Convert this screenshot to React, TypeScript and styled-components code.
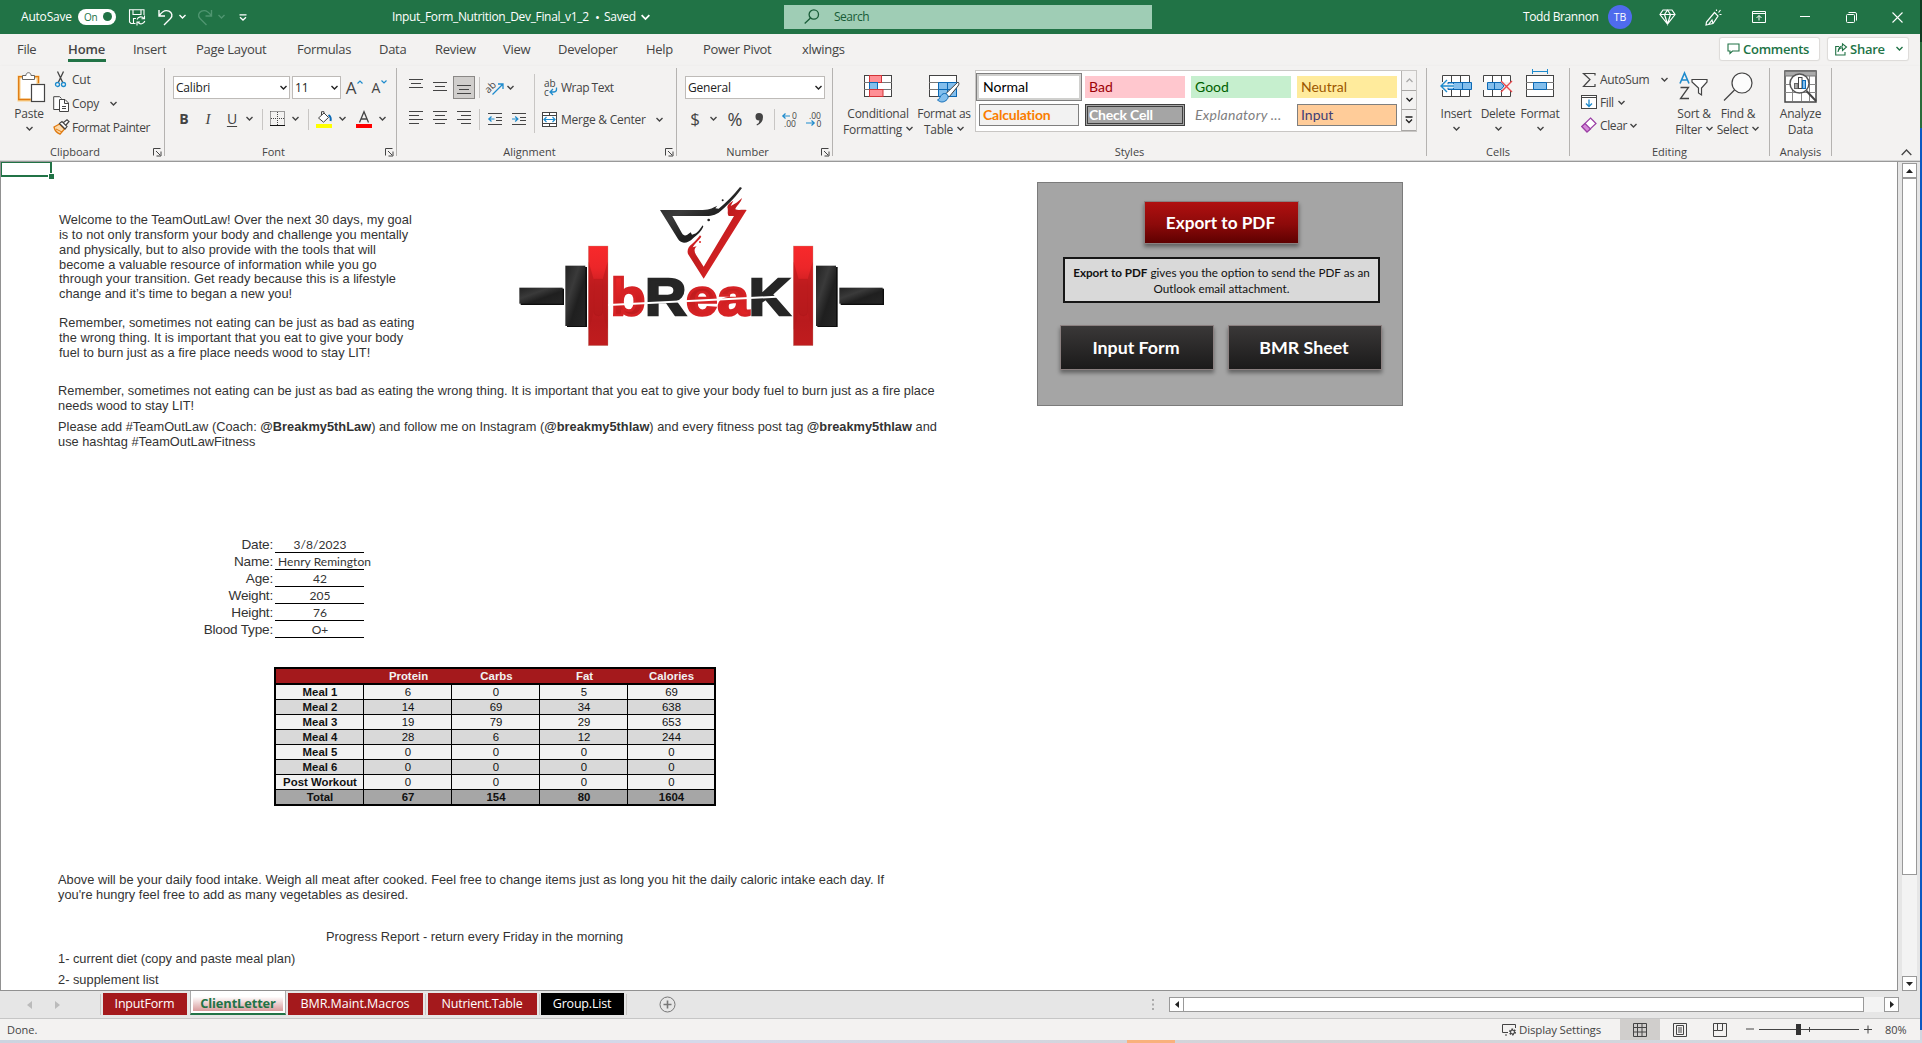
import React from 'react';
import styled, { createGlobalStyle, css } from 'styled-components';

const UI = '"Open Sans", "Noto Sans", sans-serif';
const CELL = '"Liberation Sans", Arial, sans-serif';
const CALIBRI = 'Lato, "Noto Sans", sans-serif';

const Global = createGlobalStyle`
  * { box-sizing: border-box; }
  html, body { margin: 0; padding: 0; overflow: hidden; }
  body { width: 1922px; height: 1043px; background: #d2d6e0; font-family: ${UI}; color: #444; }
  svg { display: block; flex: none; overflow: visible; }
`;

/* ---------- shared primitives ---------- */
const Row = styled.div<{ $h?: number; $mt?: number; $ml?: number }>`
  display: flex;
  align-items: center;
  flex: none;
  height: ${p => (p.$h ? `${p.$h}px` : 'auto')};
  margin-top: ${p => p.$mt ?? 0}px;
  margin-left: ${p => p.$ml ?? 0}px;
`;
const Col = styled.div<{ $w?: number; $ml?: number; $mt?: number }>`
  display: flex;
  flex-direction: column;
  flex: none;
  width: ${p => (p.$w ? `${p.$w}px` : 'auto')};
  margin-left: ${p => p.$ml ?? 0}px;
  margin-top: ${p => p.$mt ?? 0}px;
`;
const Slot = styled.div<{ $w: number; $ml?: number; $mt?: number }>`
  flex: none;
  display: flex;
  align-items: center;
  width: ${p => p.$w}px;
  margin-left: ${p => p.$ml ?? 0}px;
  margin-top: ${p => p.$mt ?? 0}px;
  white-space: nowrap;
`;
const Label = styled.span<{ $size?: number; $ls?: number; $color?: string; $bold?: boolean }>`
  font-size: ${p => p.$size ?? 12}px;
  letter-spacing: ${p => p.$ls ?? -0.4}px;
  color: ${p => p.$color ?? 'inherit'};
  font-weight: ${p => (p.$bold ? 600 : 400)};
  line-height: 16px;
  white-space: nowrap;
`;
const Icon = ({ w, h, children }: { w: number; h: number; children: React.ReactNode }) => (
  <svg width={w} height={h} viewBox={`0 0 ${w} ${h}`} fill="none" stroke="#444" strokeWidth="1">
    {children}
  </svg>
);
const Chevron = ({ color = '#444', size = 7 }: { color?: string; size?: number }) => (
  <svg width={size} height={size * 0.72} viewBox="0 0 7 5" fill="none" stroke={color} strokeWidth="1.4">
    <path d="M.5 .9 3.5 3.9 6.5 .9" />
  </svg>
);

/* ---------- window ---------- */
const Desktop = styled.div`
  display: grid;
  grid-template-columns: 1920px 2px;
  grid-template-rows: 1040px 3px;
  width: 1922px;
  height: 1043px;
`;
const Window = styled.div`
  display: flex;
  flex-direction: column;
  background: #f3f2f1;
  overflow: hidden;
`;
const Wallpaper = styled.div`
  background: linear-gradient(#0f3a20 0 42px, #2a6b3a 42px 128px, #0b5ac2 128px 1030px, #d2d6e0 1030px);
`;
const TaskbarEdge = styled.div`
  grid-column: 1 / 3;
  background: linear-gradient(90deg, transparent 1127px, #f9b17c 1127px 1175px, transparent 1175px),
    linear-gradient(90deg, #cdd4e0, #d5d9ea 700px, #d3d3d6 1300px, #d2d9e3);
`;

/* ---------- title bar ---------- */
const TitleBar = styled.div`
  display: flex;
  align-items: center;
  height: 34px;
  flex: none;
  background: #217346;
  color: #fff;
`;
const Toggle = styled.div`
  display: flex;
  align-items: center;
  justify-content: space-between;
  width: 38px;
  height: 16px;
  padding: 0 4px 0 6px;
  margin: -1px 0 0 0;
  border-radius: 8px;
  background: #fff;
  color: #217346;
  font-size: 10px;
  letter-spacing: -0.3px;
`;
const Knob = styled.i`
  width: 9px;
  height: 9px;
  border-radius: 50%;
  background: #217346;
`;
const SearchBox = styled.div`
  display: flex;
  align-items: center;
  width: 368px;
  height: 24px;
  padding-left: 20px;
  margin-left: 134px;
  background: #9fcdb5;
  color: #185c37;
`;
const Avatar = styled.div`
  display: flex;
  align-items: center;
  justify-content: center;
  width: 24px;
  height: 24px;
  border-radius: 50%;
  background: #4f6bed;
  font-size: 10.5px;
`;

/* ---------- ribbon tabs ---------- */
const Tabs = styled.div`
  display: flex;
  height: 32px;
  flex: none;
  padding-left: 17px;
`;
const Tab = styled.div<{ $w: number; $active?: boolean }>`
  width: ${p => p.$w}px;
  line-height: 31px;
  font-size: 13px;
  letter-spacing: -0.3px;
  white-space: nowrap;
  ${p => p.$active && css`
    font-weight: 600;
    letter-spacing: -0.1px;
    span {
      display: inline-block;
      width: 38px;
      height: 28px;
      border-bottom: 3px solid #217346;
    }
  `}
`;
const PillButton = styled.div<{ $w: number }>`
  display: flex;
  align-items: center;
  width: ${p => p.$w}px;
  height: 22px;
  margin-top: 4px;
  padding-left: 7px;
  border-radius: 2px;
  background: #fff;
  box-shadow: 0 0 1px 1px #dcdad8;
  color: #217346;
`;

/* ---------- ribbon ---------- */
const Ribbon = styled.div`
  display: flex;
  flex: none;
  height: 96px;
  border-bottom: 1px solid #999;
  box-shadow: inset 0 -1px #d4d4d4, 0 2px 4px rgba(0, 0, 0, 0.12);
`;
const GroupBox = styled.section<{ $w: number }>`
  position: relative;
  display: flex;
  flex-direction: column;
  flex: none;
  width: ${p => p.$w}px;
  &::after {
    content: '';
    position: absolute;
    right: 0;
    top: 2px;
    width: 1px;
    height: 88px;
    background: #b5b3b1;
  }
`;
const GroupBody = styled.div`
  display: flex;
  height: 77px;
  align-items: flex-start;
`;
const GroupFooter = styled.footer<{ $launcher?: boolean }>`
  display: flex;
  align-items: center;
  height: 18px;
  padding-right: 3px;
  font-size: 11px;
  line-height: 16px;
  span {
    flex: 1;
    margin: 0 0 0 ${p => (p.$launcher ? -3 : 2)}px;
    text-align: center;
  }
`;
const Group = ({ w, name, launcher, children }: { w: number; name: string; launcher?: boolean; children: React.ReactNode }) => (
  <GroupBox $w={w}>
    <GroupBody>{children}</GroupBody>
    <GroupFooter $launcher={launcher}>
      <span>{name}</span>
      {launcher && (
        <Icon w={9} h={9}>
          <path d="M.5 7.5V.5H7.5M3 3 7 7M8 3.5V8H3.5" />
        </Icon>
      )}
    </GroupFooter>
  </GroupBox>
);
const Big = styled.div<{ $w: number; $ml?: number }>`
  display: flex;
  flex-direction: column;
  align-items: center;
  flex: none;
  width: ${p => p.$w}px;
  margin-left: ${p => p.$ml ?? 0}px;
`;
const BigIcon = styled.div`
  height: 39px;
  display: flex;
  align-items: flex-start;
  flex: none;
`;
const BigLine = styled.div`
  display: flex;
  align-items: center;
  justify-content: center;
  gap: 4px;
  height: 16px;
  font-size: 12px;
  letter-spacing: -0.25px;
  white-space: nowrap;
`;
const BigButton = ({ w, ml, icon, top, bottom }: { w: number; ml?: number; icon: React.ReactNode; top: string; bottom?: string }) => (
  <Big $w={w} $ml={ml}>
    <BigIcon>{icon}</BigIcon>
    <BigLine>{top}</BigLine>
    <BigLine>
      {bottom}
      {bottom !== 'Data' && <Chevron />}
    </BigLine>
  </Big>
);
const VSep = styled.div<{ $h?: number; $ml?: number; $mt?: number }>`
  flex: none;
  width: 1px;
  height: ${p => p.$h ?? 21}px;
  margin-left: ${p => p.$ml ?? 0}px;
  margin-top: ${p => p.$mt ?? 0}px;
  background: #c8c6c4;
`;
const Combo = styled.div<{ $w: number; $ml?: number }>`
  display: flex;
  align-items: center;
  justify-content: space-between;
  flex: none;
  width: ${p => p.$w}px;
  height: 23px;
  margin-left: ${p => p.$ml ?? 0}px;
  padding: 0 2px 0 2px;
  border: 1px solid #bebbb8;
  background: #fff;
  color: #222;
  font-size: 12px;
  letter-spacing: -0.2px;
`;
const Pressed = styled.div`
  display: flex;
  justify-content: center;
  padding-top: 8px;
  width: 22px;
  height: 23px;
  margin-left: 6px;
  border: 1px solid #8a8886;
  background: #d0cecc;
`;
const Glyph = styled.span<{ $w: number; $ml?: number; $size?: number; $style?: 'bold' | 'italic' | 'underline' }>`
  flex: none;
  width: ${p => p.$w}px;
  margin-left: ${p => p.$ml ?? 0}px;
  text-align: center;
  font-size: ${p => p.$size ?? 14}px;
  line-height: 20px;
  ${p => p.$style === 'bold' && 'font-weight: 700;'}
  ${p => p.$style === 'italic' && 'font-style: italic; font-family: "Liberation Serif", serif;'}
  ${p => p.$style === 'underline' && 'text-decoration: underline; text-underline-offset: 2px;'}
`;

const Lines = ({ widths, align }: { widths: number[]; align: 'l' | 'c' | 'r' }) => (
  <Icon w={14} h={widths.length * 4}>
    {widths.map((n, i) => {
      const x = align === 'l' ? 0 : align === 'r' ? 14 - n : (14 - n) / 2;
      return <path key={i} d={`M${x} ${i * 4 + 0.5}h${n}`} />;
    })}
  </Icon>
);

/* style gallery */
const Gallery = styled.div`
  display: flex;
  width: 442px;
  height: 62px;
  margin: 4px 0 0 3px;
  border: 1px solid #c8c6c4;
  background: #fff;
`;
const Swatches = styled.div`
  display: grid;
  grid-template-columns: repeat(4, 100px);
  grid-template-rows: 22px 22px;
  gap: 6px;
  padding: 5px 0 0 3px;
  width: 425px;
`;
const Swatch = styled.div<{ $bg: string; $fg: string; $kind?: string }>`
  display: flex;
  align-items: center;
  padding: 0 0 1px 4px;
  background: ${p => p.$bg};
  color: ${p => p.$fg};
  font-family: ${CALIBRI};
  font-size: 14px;
  white-space: nowrap;
  ${p => p.$kind === 'selected' && css`box-shadow: 0 0 0 2px #d0d0ce, 0 0 0 3px #7f7f7f;`}
  ${p => p.$kind === 'calc' && css`border: 1px solid #7f7f7f; padding-left: 3px; font-weight: 700; letter-spacing: -0.2px;`}
  ${p => p.$kind === 'check' && css`border: 3px double #3f3f3f; padding-left: 1px; font-weight: 700; letter-spacing: -0.2px;`}
  ${p => p.$kind === 'italic' && css`font-style: italic; letter-spacing: 0.25px;`}
  ${p => p.$kind === 'input' && css`border: 1px solid #7f7f7f; padding-left: 3px;`}
`;
const GalleryScroll = styled.div`
  display: grid;
  grid-template-rows: 20px 19px 21px;
  width: 15px;
  div {
    display: flex;
    align-items: center;
    justify-content: center;
    border-left: 1px solid #b5b3b1;
    border-bottom: 1px solid #a8a6a4;
    background: #f3f2f1;
  }
`;

/* ---------- sheet ---------- */
const SheetArea = styled.div`
  display: grid;
  grid-template-columns: 1898px 22px;
  height: 829px;
  flex: none;
`;
const Sheet = styled.div`
  position: relative;
  display: flex;
  align-items: flex-start;
  background: #fff;
  border: 1px solid #919191;
  border-top: 0;
  overflow: hidden;
  font-family: ${CELL};
  color: #333;
`;
const Cursor = styled.div`
  position: absolute;
  left: 0;
  top: 0;
  width: 51px;
  height: 15px;
  border: 2px solid #217346;
  border-top-width: 1px;
  border-left-width: 1px;
  &::after {
    content: '';
    position: absolute;
    right: -4px;
    bottom: -4px;
    width: 5px;
    height: 5px;
    background: #217346;
    box-shadow: 0 0 0 1px #fff;
  }
`;
const Letter = styled.div`
  width: 1036px;
  flex: none;
  padding-left: 57px;
`;
const Top = styled.div`
  display: flex;
  height: 222px;
`;
const Intro = styled.div`
  width: 442px;
  padding: 51px 0 0 1px;
`;
const Text = styled.p<{ $mt?: number; $ls?: number; $indent?: number }>`
  margin: ${p => p.$mt ?? 0}px 0 0 ${p => p.$indent ?? 0}px;
  font-size: 12.8px;
  line-height: 14.85px;
  letter-spacing: ${p => p.$ls ?? 0.01}px;
  white-space: nowrap;
`;
const Facts = styled.dl`
  display: grid;
  grid-template-columns: 215px 89px;
  grid-auto-rows: 17px;
  column-gap: 2px;
  margin: 87px 0 0;
`;
const FactName = styled.dt`
  text-align: right;
  font-size: 13.6px;
  line-height: 18px;
  letter-spacing: -0.2px;
`;
const FactValue = styled.dd<{ $spill: boolean }>`
  display: flex;
  justify-content: ${p => (p.$spill ? 'flex-start' : 'center')};
  margin: 0;
  padding-left: ${p => (p.$spill ? 3 : 1)}px;
  border-bottom: 1px solid #000;
  font-family: ${CALIBRI};
  font-size: 12px;
  letter-spacing: 0.05px;
  line-height: 17px;
  white-space: nowrap;
`;
const Table = styled.div`
  display: grid;
  grid-template-columns: 88px 88px 88px 88px 86px;
  width: 442px;
  margin: 29px 0 0 216px;
  border: 2px solid #000;
  font-size: 11.4px;
  color: #111;
`;
const Cell = styled.div<{ $bg: string; $head?: boolean; $bold?: boolean; $edge?: boolean; $last?: boolean }>`
  height: ${p => (p.$head ? 16 : p.$last ? 14 : 15)}px;
  line-height: 15px;
  text-align: center;
  padding-left: 1px;
  background: ${p => p.$bg};
  color: ${p => (p.$head ? '#f2f2f2' : 'inherit')};
  font-weight: ${p => (p.$bold ? 700 : 400)};
  border-bottom: ${p => (p.$last ? '0' : p.$head ? '2px solid #000' : '1px solid #000')};
  border-right: ${p => (p.$edge || p.$head ? '0' : '1px solid #000')};
  white-space: nowrap;
`;
const Panel = styled.div`
  width: 366px;
  height: 224px;
  margin: 20px 0 0 0;
  padding: 18px 20px 0 22px;
  border: 1px solid #7b7b7b;
  background: #a5a5a5;
  font-family: ${CALIBRI};
`;
const MacroButton = styled.div<{ $w: number; $red?: boolean; $ml?: number; $mt?: number }>`
  display: flex;
  align-items: center;
  justify-content: center;
  flex: none;
  width: ${p => p.$w}px;
  height: ${p => (p.$red ? 43 : 45)}px;
  margin-left: ${p => p.$ml ?? 0}px;
  margin-top: ${p => p.$mt ?? 0}px;
  padding: 0 2px 1px 0;
  border: 1px solid #8b8080;
  background: ${p => (p.$red ? 'linear-gradient(#b01010, #8c0a0a 55%, #5e0000)' : 'linear-gradient(#3a3838, #1b1a1a)')};
  box-shadow: 0 3px 4px rgba(0, 0, 0, 0.4);
  color: #fff;
  font-size: ${p => (p.$red ? 17.2 : 17.8)}px;
  font-weight: 700;
`;
const Note = styled.div`
  width: 317px;
  height: 46px;
  margin: 13px 0 0 3px;
  padding: 5px 0;
  border: 2px solid #161616;
  background: #d9d9d9;
  color: #111;
  text-align: center;
  font-size: 11.7px;
  line-height: 16px;
  white-space: nowrap;
`;

/* ---------- scrollbars ---------- */
const VScroll = styled.div`
  display: flex;
  flex-direction: column;
  align-items: flex-start;
  padding: 1px 0 0 4px;
  background: #e6e6e6;
`;
const ScrollButton = styled.div`
  display: flex;
  align-items: center;
  justify-content: center;
  flex: none;
  width: 15px;
  height: 15px;
  border: 1px solid #999;
  background: #fff;
`;
const VThumb = styled.div`
  width: 15px;
  height: 697px;
  border: 1px solid #999;
  background: #fff;
`;
const VTrack = styled.div`
  width: 15px;
  height: 101px;
  background: #f3f3f3;
`;
const HThumb = styled.div`
  width: 681px;
  height: 15px;
  margin-left: -1px;
  border: 1px solid #999;
  background: #fff;
`;
const HTrack = styled.div`
  width: 20px;
  height: 15px;
  background: #f3f3f3;
`;

/* ---------- sheet tabs ---------- */
const TabStrip = styled.div`
  display: flex;
  height: 28px;
  flex: none;
  background: #e6e6e6;
  border-bottom: 1px solid #c6c6c6;
`;
const SheetTab = styled.div<{ $w: number; $ml?: number; $black?: boolean; $ls?: number }>`
  width: ${p => p.$w}px;
  height: 22px;
  margin: 2px 0 0 ${p => p.$ml ?? 0}px;
  padding-right: 1px;
  flex: none;
  background: ${p => (p.$black ? '#000' : '#a4191c')};
  color: #fff;
  font-size: 12.5px;
  line-height: 21px;
  letter-spacing: ${p => p.$ls ?? -0.2}px;
  text-align: center;
  white-space: nowrap;
`;
const ActiveTab = styled.div`
  width: 96px;
  height: 25px;
  margin: -1px 0 0 3px;
  flex: none;
  background: linear-gradient(#fff 20%, #d89a9b) content-box, #fff;
  padding: 3px 2px 2px;
  border-bottom: 2px solid #217346;
  border-left: 1px solid #aaa;
  border-right: 1px solid #aaa;
  color: #217346;
  font-size: 12.8px;
  font-weight: 700;
  letter-spacing: -0.1px;
  line-height: 21px;
  text-align: center;
  white-space: nowrap;
`;
const Status = styled.div`
  display: flex;
  align-items: center;
  height: 21px;
  flex: none;
  padding-left: 7px;
`;
const ViewButton = styled.div<{ $on?: boolean }>`
  display: flex;
  align-items: center;
  justify-content: center;
  width: 40px;
  height: 21px;
  background: ${p => (p.$on ? '#d0cecc' : 'transparent')};
`;
const Push = styled.div`
  flex: 1;
`;

/* ---------- data ---------- */
const tabs: [string, number][] = [
  ['File', 51], ['Home', 65], ['Insert', 63], ['Page Layout', 101], ['Formulas', 82], ['Data', 56], ['Review', 68],
  ['View', 55], ['Developer', 88], ['Help', 57], ['Power Pivot', 99], ['xlwings', 100],
];
const facts = [
  ['Date:', '3/8/2023'], ['Name:', 'Henry Remington'], ['Age:', '42'], ['Weight:', '205'], ['Height:', '76'], ['Blood Type:', 'O+'],
];
const meals = [
  ['Meal 1', '6', '0', '5', '69'],
  ['Meal 2', '14', '69', '34', '638'],
  ['Meal 3', '19', '79', '29', '653'],
  ['Meal 4', '28', '6', '12', '244'],
  ['Meal 5', '0', '0', '0', '0'],
  ['Meal 6', '0', '0', '0', '0'],
  ['Post Workout', '0', '0', '0', '0'],
  ['Total', '67', '154', '80', '1604'],
];

/* ---------- icons ---------- */
const BLUE = '#1e8bcd';
const PasteIcon = () => (
  <svg width="28" height="31" viewBox="0 0 28 31" fill="none">
    <rect x="1" y="5" width="19" height="23" fill="#fff" stroke="#f9d08b" strokeWidth="3" />
    <path d="M12.5 27.5H.7V4.7H20.5V11" stroke="#e07b12" strokeWidth="1.3" />
    <path d="M4.5 7.5V3.5H8C8 1.8 9 .7 10.5 .7S13 1.8 13 3.5H16.5V7.5Z" fill="#fff" stroke="#666" />
    <rect x="13.5" y="12.5" width="13" height="17" fill="#fff" stroke="#444" strokeWidth="1.2" />
  </svg>
);
const GridIcon = ({ w, h, cols, rows }: { w: number; h: number; cols: number[]; rows: number[] }) => (
  <>
    <rect x=".5" y=".5" width={w - 1} height={h - 1} fill="#fff" stroke="#444" />
    {cols.map(c => <path key={`c${c}`} d={`M${c}.5V${h}`} stroke="#777" />)}
    {rows.map(r => <path key={`r${r}`} d={`M0 ${r}.5H${w}`} stroke="#777" />)}
  </>
);
const ConditionalIcon = () => (
  <Icon w={28} h={32}>
    <g transform="translate(0 9)">
      <GridIcon w={28} h={22} cols={[5, 22]} rows={[7, 14]} />
      <rect x="5.5" y=".5" width="12" height="7" fill="#ff8f95" stroke="#d13438" />
      <rect x="5.5" y="7.5" width="8" height="7" fill="#83beec" stroke="#0b69b5" />
      <rect x="5.5" y="14.5" width="13.5" height="7" fill="#ff8f95" stroke="#d13438" />
    </g>
  </Icon>
);
const FormatTableIcon = () => (
  <Icon w={31} h={36}>
    <g transform="translate(0 9)">
      <GridIcon w={28} h={22} cols={[9, 18]} rows={[7, 14]} />
      <path d="M9.5 7.5H27.5V21.5H9.5Z" fill="#83beec" stroke="#0b69b5" />
      <path d="M9.5 14.5H27.5M18.5 7.5V21.5" stroke="#0b69b5" />
      <path d="M29 7C30.5 8 30 9.5 29 11L20 22 16.5 19Z" fill="#fff" stroke="#444" />
      <path d="M8.5 25C11 24.5 11.5 18.5 15.5 18.5S20.5 23 17 25.5 11 27 8.5 25Z" fill="#83beec" stroke="#0b69b5" />
    </g>
  </Icon>
);
const InsertIcon = () => (
  <Icon w={32} h={32}>
    <path d="M2.5 16V9.5H29.5V16M11.5 9.5V16M20.5 9.5V16M2.5 24V30.5H29.5V24M11.5 24V30.5M20.5 24V30.5" fill="#fff" />
    <path d="M8 16.5H31.5V23.5H8Z" fill="#83beec" stroke="#0b69b5" />
    <path d="M13.5 16.5V23.5M22.5 16.5V23.5" stroke="#0b69b5" />
    <path d="M14 18.3H5.5V21.7H14Z" fill="#fff" stroke="none" />
    <path d="M14 20H1M7 14 1 20 7 26" stroke={BLUE} strokeWidth="1.4" />
  </Icon>
);
const DeleteIcon = () => (
  <Icon w={30} h={32}>
    <path d="M.5 16V9.5H27.5V16M9.5 9.5V16M18.5 9.5V16M.5 24V30.5H27.5V24M9.5 24V30.5M18.5 24V30.5" fill="#fff" />
    <path d="M4.5 16.5H18L21 20 18 23.5H4.5ZM11.5 16.5V23.5" fill="#83beec" stroke="#0b69b5" />
    <path d="M18 15 29 26M29 15 18 26" stroke="#e8474c" strokeWidth="1.4" />
  </Icon>
);
const FormatIcon = () => (
  <Icon w={28} h={32}>
    <path d="M6.5 3V8M21.5 3V8M6.5 5.5H21.5" stroke={BLUE} />
    <g transform="translate(0 9)">
      <GridIcon w={28} h={22} cols={[7, 20]} rows={[7, 14]} />
      <path d="M7.5 7.5H20.5V14.5H7.5Z" fill="#83beec" stroke="#0b69b5" />
    </g>
  </Icon>
);
const SortIcon = () => (
  <Icon w={30} h={34}>
    <path d="M1 17.5 5.5 7 10 17.5M2.5 14H8.5" stroke={BLUE} strokeWidth="1.6" />
    <path d="M1.5 21.5H9.5L1.5 32.5H10" strokeWidth="1.3" />
    <path d="M13 13.5H28V16L22.5 22V29L19.5 27V22L13 16Z" fill="#fff" strokeWidth="1.2" />
  </Icon>
);
const FindIcon = () => (
  <Icon w={30} h={36}>
    <circle cx="19" cy="17" r="10" fill="#fcfcfc" strokeWidth="1.2" />
    <path d="M11.5 24 1 34.5" strokeWidth="1.3" />
  </Icon>
);
const AnalyzeIcon = () => (
  <Icon w={33} h={37}>
    <rect x="1" y="5" width="31" height="31" fill="#fff" strokeWidth="1.5" />
    <path d="M1 5.5H32V10H1Z" fill="#aaa" stroke="#777" />
    <path d="M1 18.5H32M1 26.5H32M8.5 10V35M17.5 10V35M25.5 10V35" stroke="#888" />
    <circle cx="15.5" cy="17.5" r="9.5" fill="#fff" stroke="#555" strokeWidth="1.5" />
    <path d="M22.5 25 32 35" strokeWidth="2" />
    <rect x="10.5" y="17.5" width="3.5" height="5" fill="#aaa" stroke="#666" />
    <rect x="14.5" y="11.5" width="3.5" height="11" fill="#fff" />
    <rect x="18.5" y="14.5" width="3" height="8" fill="#83beec" stroke="#0b69b5" />
  </Icon>
);

const LogoBox = styled.svg`
  margin-top: 8px;
`;
const Logo = () => (
  <LogoBox width="400" height="190" viewBox="0 0 1200 570">
    <defs>
      <linearGradient id="plate" x1="0" y1="0" x2="0" y2="1">
        <stop offset="0" stopColor="#f8292b" />
        <stop offset=".22" stopColor="#ec2629" />
        <stop offset=".4" stopColor="#cb1f22" />
        <stop offset=".75" stopColor="#b91a1d" />
        <stop offset="1" stopColor="#c01c1e" />
      </linearGradient>
      <linearGradient id="letters" x1="0" y1="0" x2="1" y2="1">
        <stop offset="0" stopColor="#f8292b" />
        <stop offset=".45" stopColor="#c01c1e" />
        <stop offset="1" stopColor="#f8292b" />
      </linearGradient>
      <linearGradient id="coal" x1="0" y1="0" x2="1" y2="1">
        <stop offset="0" stopColor="#222" />
        <stop offset=".35" stopColor="#3a3a3a" />
        <stop offset=".6" stopColor="#1f1f1f" />
        <stop offset="1" stopColor="#262626" />
      </linearGradient>
    </defs>
    <g fill="#0d0d0d">
      <rect x="62" y="356" width="130" height="49" />
      <rect x="201" y="291" width="60" height="180" />
      <rect x="952" y="291" width="61" height="180" />
      <rect x="1022" y="356" width="130" height="49" />
    </g>
    <g fill="url(#coal)">
      <rect x="58" y="353" width="130" height="48" />
      <rect x="196" y="287" width="60" height="181" />
      <rect x="948" y="287" width="60" height="181" />
      <rect x="1018" y="353" width="130" height="48" />
    </g>
    <g fill="url(#plate)" stroke="#b98" strokeWidth="1">
      <rect x="265" y="228" width="59" height="299" />
      <rect x="880" y="228" width="59" height="299" />
    </g>
    <g fill="#b3191b" stroke="#a01517" strokeWidth="1.5" opacity=".55">
      <path d="M281 328H308V425Q307 437 295 437T281 425Z" />
      <path d="M896 328H923V425Q922 437 910 437T896 425Z" />
      <path d="M266 275 281 328V425L266 480ZM323 275 308 328V425L323 480Z" stroke="none" />
      <path d="M881 275 896 328V425L881 480ZM938 275 923 328V425L938 480Z" stroke="none" />
    </g>
    <path
      d="M480 120H608C632 119 640 112 652 107L646 115 656 116C680 98 700 75 720 51L726 54C700 90 680 108 656 128 640 138 625 138 608 138H517L546 190C550 197 556 198 562 194L572 187 576 194 588 190C598 182 602 174 608 166L610 170C604 184 592 194 580 204 570 214 562 218 552 218 544 217 538 214 534 207Z"
      fill="url(#coal)"
    />
    <circle cx="626" cy="150" r="4" fill="#222" />
    <circle cx="668" cy="91" r="3" fill="#222" />
    <path
      d="M740 120 611 326 564 252C560 240 566 228 576 222 588 212 594 204 600 196L604 200C598 210 584 220 578 232L590 229C582 236 582 244 588 254L611 290 702 138H686C680 130 686 122 682 112 682 104 690 98 700 92L692 108C706 102 716 94 726 84 722 100 706 110 706 118 714 122 728 118 740 120Z"
      fill="url(#letters)"
    />
    <circle cx="600" cy="216" r="3" fill="#d22" />
    <text x="332" y="435" fontFamily="Liberation Sans, Arial, sans-serif" fontWeight="700" fontSize="156" textLength="538" lengthAdjust="spacingAndGlyphs" strokeWidth="8">
      <tspan fill="url(#letters)" stroke="#d62225">b</tspan>
      <tspan fill="#262626" stroke="#262626">R</tspan>
      <tspan fill="url(#letters)" stroke="#d62225">ea</tspan>
      <tspan fill="#262626" stroke="#262626">K</tspan>
    </text>
    <path d="M325 402 874 375V381L325 408Z" fill="#fff" />
  </LogoBox>
);

/* ---------- app ---------- */
export default function App() {
  return (
    <>
      <Global />
      <Desktop>
        <Window>
          <TitleBar>
            <Slot $w={57} $ml={21}><Label $ls={-0.2}>AutoSave</Label></Slot>
            <Toggle>On<Knob /></Toggle>
            <Slot $w={17} $ml={13}>
              <svg width="17" height="17" viewBox="0 0 17 17" fill="none" stroke="#fff" strokeWidth="1.1">
                <path d="M6.5 14.5H2L.5 13V.7H15V6M4 .7V5.5H12V.7M4.5 14.5V9.5H7" />
                <path d="M8 10.5A4 4 0 0 1 15 9.5M15.5 6.5V9.8H12.5M15.8 12A4 4 0 0 1 9 13.5M8 16.5V13H11" />
              </svg>
            </Slot>
            <Slot $w={16} $ml={12}>
              <svg width="16" height="17" viewBox="0 0 16 17" fill="none" stroke="#fff" strokeWidth="1.4">
                <path d="M1 1V7H7M1 7C4 2.5 8 .8 11 2.2S15 7 12.5 9.5L6 16" />
              </svg>
            </Slot>
            <Slot $w={7} $ml={5}><Chevron color="#fff" /></Slot>
            <Slot $w={16} $ml={11}>
              <svg width="16" height="17" viewBox="0 0 16 17" fill="none" stroke="#4f9570" strokeWidth="1.4">
                <path d="M14.5 1V7H8.5M14.5 7C11.5 2.5 7.5 .8 4.5 2.2S.5 7 3 9.5L9.5 16" />
              </svg>
            </Slot>
            <Slot $w={7} $ml={5}><Chevron color="#4f9570" /></Slot>
            <Slot $w={8} $ml={14}>
              <svg width="8" height="7" viewBox="0 0 8 7" fill="none" stroke="#fff" strokeWidth="1.3">
                <path d="M.5 .8H7.5M1 3.2 4 6 7 3.2" />
              </svg>
            </Slot>
            <Slot $w={203} $ml={145}><Label $ls={-0.34}>Input_Form_Nutrition_Dev_Final_v1_2</Label></Slot>
            <Slot $w={9}><Label $size={13}>•</Label></Slot>
            <Slot $w={37}><Label $ls={-0.3}>Saved</Label></Slot>
            <Chevron color="#fff" size={9} />
            <SearchBox>
              <svg width="16" height="16" viewBox="0 0 16 16" fill="none" stroke="#185c37" strokeWidth="1.3">
                <circle cx="9.8" cy="5.5" r="4.7" />
                <path d="M6.5 9 .7 14.5" />
              </svg>
              <Slot $w={60} $ml={14}><Label $ls={-0.5}>Search</Label></Slot>
            </SearchBox>
            <Slot $w={73} $ml={371}><Label>Todd Brannon</Label></Slot>
            <Slot $w={24} $ml={12}><Avatar>TB</Avatar></Slot>
            <Slot $w={17} $ml={27}>
              <svg width="17" height="16" viewBox="0 0 17 16" fill="none" stroke="#fff" strokeWidth="1.2">
                <path d="M4 1H13L16 5.5 8.5 15 1 5.5ZM1 5.5H16M5.5 5.5 8.5 15 11.5 5.5 8.5 1 5.5 5.5" />
              </svg>
            </Slot>
            <Slot $w={17} $ml={29}>
              <svg width="17" height="17" viewBox="0 0 17 17" fill="none" stroke="#fff" strokeWidth="1.2">
                <path d="M9.5 3.5 13 7 8 14.5 3.5 15.5 1 16 1.5 13ZM8 14.5 7 11 3.5 15.5M11.5 2V.5M13.5 3.5 15.5 1M14.5 5.5H16.5" />
              </svg>
            </Slot>
            <Slot $w={14} $ml={30}>
              <svg width="14" height="12" viewBox="0 0 14 12" fill="none" stroke="#fff">
                <path d="M.5 .5H13.5V11.5H.5ZM.5 2.5H13.5M7 9.5V4.5M4.5 7 7 4.5 9.5 7" />
              </svg>
            </Slot>
            <Slot $w={10} $ml={34}>
              <svg width="10" height="2" viewBox="0 0 10 2" stroke="#fff"><path d="M0 .5H10" /></svg>
            </Slot>
            <Slot $w={11} $ml={36}>
              <svg width="11" height="11" viewBox="0 0 11 11" fill="none" stroke="#fff">
                <rect x=".5" y="2.5" width="8" height="8" rx="1" />
                <path d="M2.5 .5H9A1.5 1.5 0 0 1 10.5 2V8.5" />
              </svg>
            </Slot>
            <Slot $w={11} $ml={35}>
              <svg width="11" height="11" viewBox="0 0 11 11" stroke="#fff" strokeWidth="1.1"><path d="M.5 .5 10.5 10.5M10.5 .5 .5 10.5" /></svg>
            </Slot>
          </TitleBar>

          <Tabs>
            {tabs.map(([name, w]) => (
              <Tab key={name} $w={w} $active={name === 'Home'}><span>{name}</span></Tab>
            ))}
            <Push />
            <PillButton $w={99}>
              <svg width="13" height="12" viewBox="0 0 13 12" fill="none" stroke="#217346" strokeWidth="1.1">
                <path d="M1 1H12V8H5.5L3 10.5V8H1Z" />
              </svg>
              <Slot $w={66} $ml={3}><Label $size={13} $ls={-0.25} $bold>Comments</Label></Slot>
            </PillButton>
            <Slot $w={9} />
            <PillButton $w={80}>
              <svg width="12" height="13" viewBox="0 0 12 13" fill="none" stroke="#217346" strokeWidth="1.1">
                <path d="M4 3.5H.7V12H10V9M3 9C3.5 6 5 4.7 7.5 4.7V7.5L11.5 4 7.5 .8V3C5 3 3.5 5 3 9Z" />
              </svg>
              <Slot $w={46} $ml={3}><Label $size={13} $ls={-0.25} $bold>Share</Label></Slot>
              <Chevron color="#217346" />
            </PillButton>
            <Slot $w={12} />
          </Tabs>

          <Ribbon>
            <Group w={165} name="Clipboard" launcher>
              <BigButton w={30} ml={14} top="Paste" icon={<Col $mt={6} $ml={5}><PasteIcon /></Col>} />
              <Col $ml={9} $mt={2}>
                <Row $h={24}>
                  <Slot $w={19} $mt={-2}>
                    <Icon w={14} h={17}>
                      <path d="M4.5 .5 9.5 11M10.5 .5 5.5 11" strokeWidth="1.3" />
                      <circle cx="4.5" cy="13.5" r="2" stroke={BLUE} strokeWidth="1.3" />
                      <circle cx="10.5" cy="13.5" r="2" stroke={BLUE} strokeWidth="1.3" />
                    </Icon>
                  </Slot>
                  <Label $ls={-0.2}>Cut</Label>
                </Row>
                <Row $h={24}>
                  <Slot $w={19}>
                    <Icon w={17} h={17}>
                      <path d="M6 13.5H.7V.7H6.5L8.5 2.5" fill="#fff" />
                      <path d="M6.5 3.5H12L15.5 7V15.5H6.5ZM11.5 3.5V7.5H15.5M9 10.5H13M9 12.5H13" fill="#fff" />
                    </Icon>
                  </Slot>
                  <Slot $w={38}><Label $ls={-0.3}>Copy</Label></Slot>
                  <Chevron />
                </Row>
                <Row $h={24}>
                  <Slot $w={19} $mt={-3}>
                    <Icon w={17} h={16}>
                      <path d="M1 8 6.5 5 11.5 10 7 15.2Q2 13 1 8Z" fill="#fdd9a8" stroke="#e07b12" strokeWidth="1.3" />
                      <path d="M3 10 9 13" stroke="#e07b12" />
                      <path d="M6.5 4.5 9 2.5 14 7.5 12 10ZM10.5 3.5 14 .7 16 2.5 13 6" fill="#fff" strokeWidth="1.2" />
                    </Icon>
                  </Slot>
                  <Label>Format Painter</Label>
                </Row>
              </Col>
            </Group>

            <Group w={232} name="Font" launcher>
              <Col $mt={10} $ml={8}>
                <Row $h={23}>
                  <Combo $w={117}>Calibri<Chevron color="#222" /></Combo>
                  <Combo $w={49} $ml={2}>11<Chevron color="#222" /></Combo>
                  <Glyph $w={12} $ml={4} $size={17}>A</Glyph>
                  <Slot $w={6} $mt={-12}><Icon w={6} h={4}><path d="M.5 3.5 3 1 5.5 3.5" stroke={BLUE} strokeWidth="1.2" /></Icon></Slot>
                  <Glyph $w={10} $ml={8} $size={14}>A</Glyph>
                  <Slot $w={6} $mt={-12}><Icon w={6} h={4}><path d="M.5 .5 3 3 5.5 .5" stroke={BLUE} strokeWidth="1.2" /></Icon></Slot>
                </Row>
                <Row $h={24} $mt={8}>
                  <Glyph $w={12} $ml={5} $style="bold">B</Glyph>
                  <Glyph $w={12} $ml={12} $size={15} $style="italic">I</Glyph>
                  <Glyph $w={12} $ml={12} $style="underline">U</Glyph>
                  <Slot $w={7} $ml={8}><Chevron /></Slot>
                  <VSep $ml={9} />
                  <Slot $w={16} $ml={7}>
                    <Icon w={15} h={16}>
                      <path d="M.5 .5H14.5V14M.5 .5V14M7.5 1V14M1 7.5H14" strokeDasharray="1 1" />
                      <path d="M0 14.5H15" stroke="#111" />
                    </Icon>
                  </Slot>
                  <Slot $w={7} $ml={6}><Chevron /></Slot>
                  <VSep $ml={9} />
                  <Slot $w={16} $ml={7}>
                    <Icon w={16} h={17}>
                      <path d="M2.5 7 8 2 12.5 6.5 7.5 11.2ZM5.5 4V.7H8V3" fill="#fff" />
                      <path d="M12.5 4Q15.5 6 14.5 10" stroke="#0b69b5" strokeWidth="2" />
                      <path d="M0 15H16" stroke="#ff0" strokeWidth="4" />
                    </Icon>
                  </Slot>
                  <Slot $w={7} $ml={7}><Chevron /></Slot>
                  <Slot $w={16} $ml={10}>
                    <Icon w={16} h={17}>
                      <path d="M3.5 11.5 8 .8 12.5 11.5M5 8H11" strokeWidth="1.3" />
                      <path d="M0 15H16" stroke="#f00" strokeWidth="4" />
                    </Icon>
                  </Slot>
                  <Slot $w={7} $ml={7}><Chevron /></Slot>
                </Row>
              </Col>
            </Group>

            <Group w={280} name="Alignment" launcher>
              <Col $w={137} $mt={10}>
                <Row $h={23}>
                  <Slot $w={14} $ml={12} $mt={-5}><Lines widths={[14, 10, 14]} align="c" /></Slot>
                  <Slot $w={14} $ml={10}><Lines widths={[14, 10, 14]} align="c" /></Slot>
                  <Pressed><Lines widths={[14, 10, 14]} align="c" /></Pressed>
                  <VSep $ml={4} />
                  <Slot $w={17} $ml={7}>
                    <Icon w={17} h={17}>
                      <text x="-3" y="10" transform="rotate(-45 5 7)" fontSize="10" fill="#444" stroke="none">ab</text>
                      <path d="M5.5 15.5 15.5 5.5M11 5H16V10" stroke={BLUE} strokeWidth="1.3" />
                    </Icon>
                  </Slot>
                  <Slot $w={7} $ml={3}><Chevron /></Slot>
                </Row>
                <Row $h={24} $mt={8}>
                  <Slot $w={14} $ml={12}><Lines widths={[14, 10, 14, 10]} align="l" /></Slot>
                  <Slot $w={14} $ml={10}><Lines widths={[14, 10, 14, 10]} align="c" /></Slot>
                  <Slot $w={14} $ml={10}><Lines widths={[14, 10, 14, 10]} align="r" /></Slot>
                  <VSep $ml={8} />
                  <Slot $w={14} $ml={8}>
                    <Icon w={15} h={14}>
                      <path d="M0 1.5H14M8 5.5H14M8 8.5H14M0 12.5H14" />
                      <path d="M6.5 7H.8M3.5 4.5 .8 7 3.5 9.5" stroke={BLUE} strokeWidth="1.2" />
                    </Icon>
                  </Slot>
                  <Slot $w={14} $ml={10}>
                    <Icon w={15} h={14}>
                      <path d="M0 1.5H14M8 5.5H14M8 8.5H14M0 12.5H14" />
                      <path d="M0 7H5.8M3.2 4.5 5.9 7 3.2 9.5" stroke={BLUE} strokeWidth="1.2" />
                    </Icon>
                  </Slot>
                </Row>
              </Col>
              <VSep $h={59} $mt={8} />
              <Col $mt={10} $ml={7}>
                <Row $h={24}>
                  <Slot $w={19}>
                    <Icon w={16} h={18}>
                      <text x="2" y="7.5" fontSize="10" fill="#444" stroke="none">ab</text>
                      <text x="2" y="16.5" fontSize="10" fill="#444" stroke="none">c</text>
                      <path d="M14.5 8.5V10.5Q14.5 13 11.5 13H8.5M11 10 8 13 11 16" stroke={BLUE} strokeWidth="1.3" />
                    </Icon>
                  </Slot>
                  <Label $ls={-0.5}>Wrap Text</Label>
                </Row>
                <Row $h={24} $mt={8}>
                  <Slot $w={19}>
                    <Icon w={16} h={16}>
                      <rect x=".5" y=".5" width="14" height="14" fill="#fff" />
                      <path d="M7.5 0V4M7.5 11V15M0 3.5H15M0 11.5H15" />
                      <path d="M2 7.5H13M4.5 5 2 7.5 4.5 10M10.5 5 13 7.5 10.5 10" stroke={BLUE} strokeWidth="1.2" />
                    </Icon>
                  </Slot>
                  <Slot $w={95}><Label $ls={-0.25}>Merge &amp; Center</Label></Slot>
                  <Chevron />
                </Row>
              </Col>
            </Group>

            <Group w={156} name="Number" launcher>
              <Col $mt={10} $ml={8}>
                <Row $h={23}><Combo $w={140}>General<Chevron color="#222" /></Combo></Row>
                <Row $h={24} $mt={8}>
                  <Glyph $w={12} $ml={4} $size={17}>$</Glyph>
                  <Slot $w={7} $ml={9}><Chevron /></Slot>
                  <Glyph $w={18} $ml={9} $size={18}>%</Glyph>
                  <Slot $w={10} $ml={11}>
                    <svg width="9" height="13" viewBox="0 0 9 13"><path d="M4 0A4 4 0 0 1 8 4Q8 10 2 12.5L1.5 11.5Q4.5 10 4.5 7.5A3.7 3.7 0 1 1 4 0" fill="#444" /></svg>
                  </Slot>
                  <VSep $ml={9} />
                  <Slot $w={17} $ml={7}>
                    <Icon w={17} h={17}>
                      <text x="10" y="8" fontSize="8.5" fill="#444" stroke="none">0</text>
                      <text x="2" y="16" fontSize="8.5" fill="#444" stroke="none">.00</text>
                      <path d="M8 5H.8M3.5 2.5 .8 5 3.5 7.5" stroke={BLUE} strokeWidth="1.2" />
                    </Icon>
                  </Slot>
                  <Slot $w={17} $ml={7}>
                    <Icon w={17} h={17}>
                      <text x="3" y="8" fontSize="8.5" fill="#444" stroke="none">.00</text>
                      <text x="10.5" y="16" fontSize="8.5" fill="#444" stroke="none">0</text>
                      <path d="M0 12H8M5.5 9.5 8.2 12 5.5 14.5" stroke={BLUE} strokeWidth="1.2" />
                    </Icon>
                  </Slot>
                </Row>
              </Col>
            </Group>

            <Group w={594} name="Styles">
              <BigButton w={74} ml={8} top="Conditional" bottom="Formatting" icon={<ConditionalIcon />} />
              <BigButton w={56} ml={1} top="Format as" bottom="Table" icon={<FormatTableIcon />} />
              <Gallery>
                <Swatches>
                  <Swatch $bg="#fff" $fg="#000" $kind="selected">Normal</Swatch>
                  <Swatch $bg="#ffc7ce" $fg="#9c0006">Bad</Swatch>
                  <Swatch $bg="#c6efce" $fg="#006100">Good</Swatch>
                  <Swatch $bg="#ffeb9c" $fg="#9c5700">Neutral</Swatch>
                  <Swatch $bg="#f2f2f2" $fg="#fa7d00" $kind="calc">Calculation</Swatch>
                  <Swatch $bg="#a5a5a5" $fg="#fff" $kind="check">Check Cell</Swatch>
                  <Swatch $bg="#fff" $fg="#7f7f7f" $kind="italic">Explanatory ...</Swatch>
                  <Swatch $bg="#ffcc99" $fg="#3f3f76" $kind="input">Input</Swatch>
                </Swatches>
                <GalleryScroll>
                  <div><svg width="7" height="5" viewBox="0 0 7 5" fill="none" stroke="#aaa" strokeWidth="1.3"><path d="M.5 4 3.5 1 6.5 4" /></svg></div>
                  <div><Chevron color="#222" /></div>
                  <div><svg width="8" height="8" viewBox="0 0 8 8" fill="none" stroke="#222" strokeWidth="1.3"><path d="M.5 1H7.5M1 3.5 4 6.5 7 3.5" /></svg></div>
                </GalleryScroll>
              </Gallery>
            </Group>

            <Group w={143} name="Cells">
              <BigButton w={38} ml={10} top="Insert" icon={<InsertIcon />} />
              <BigButton w={42} ml={2} top="Delete" icon={<DeleteIcon />} />
              <BigButton w={42} ml={0} top="Format" icon={<FormatIcon />} />
            </Group>

            <Group w={200} name="Editing">
              <Col $ml={11} $mt={2}>
                <Row $h={23}>
                  <Slot $w={19}><Icon w={15} h={16}><path d="M14 3.5V1.5H2.5L9 7.5 2.5 14.5H14V12" strokeWidth="1.2" /></Icon></Slot>
                  <Slot $w={61}><Label $ls={-0.3}>AutoSum</Label></Slot>
                  <Chevron />
                </Row>
                <Row $h={23}>
                  <Slot $w={19}>
                    <Icon w={16} h={15}>
                      <rect x=".5" y=".5" width="15" height="13" fill="#fff" />
                      <path d="M0 2.5H16" />
                      <path d="M8 4.5V11.5M5 8.5 8 11.5 11 8.5" stroke={BLUE} strokeWidth="1.3" />
                    </Icon>
                  </Slot>
                  <Slot $w={18}><Label>Fill</Label></Slot>
                  <Chevron />
                </Row>
                <Row $h={23}>
                  <Slot $w={19} $mt={-2}>
                    <Icon w={16} h={16}>
                      <path d="M9.5 1 15 6.5 6 15 .8 9.5Z" fill="#fff" stroke="#9b3fa5" strokeWidth="1.2" />
                      <path d="M4 6.5 9.5 12 6 15 .8 9.5Z" fill="#d58ad9" stroke="#9b3fa5" strokeWidth="1.2" />
                    </Icon>
                  </Slot>
                  <Slot $w={30}><Label>Clear</Label></Slot>
                  <Chevron />
                </Row>
              </Col>
              <BigButton w={42} ml={5} top="Sort &amp;" bottom="Filter" icon={<SortIcon />} />
              <BigButton w={44} ml={1} top="Find &amp;" bottom="Select" icon={<FindIcon />} />
            </Group>

            <Group w={62} name="Analysis">
              <BigButton w={61} top="Analyze" bottom="Data" icon={<AnalyzeIcon />} />
            </Group>
            <Slot $w={11} $ml={69} $mt={78}>
              <svg width="11" height="7" viewBox="0 0 11 7" fill="none" stroke="#444" strokeWidth="1.3"><path d="M.7 6 5.5 1 10.3 6" /></svg>
            </Slot>
          </Ribbon>

          <SheetArea>
            <Sheet>
              <Cursor />
              <Letter>
                <Top>
                  <Intro>
                    <Text $ls={0.02}>
                      Welcome to the TeamOutLaw! Over the next 30 days, my goal<br />
                      is to not only transform your body and challenge you mentally<br />
                      and physically, but to also provide with the tools that will<br />
                      become a valuable resource of information while you go<br />
                      through your transition. Get ready because this is a lifestyle<br />
                      change and it’s time to began a new you!
                    </Text>
                    <Text $mt={14} $ls={0.02}>
                      Remember, sometimes not eating can be just as bad as eating<br />
                      the wrong thing. It is important that you eat to give your body<br />
                      fuel to burn just as a fire place needs wood to stay LIT!
                    </Text>
                  </Intro>
                  <Logo />
                </Top>
                <Text>
                  Remember, sometimes not eating can be just as bad as eating the wrong thing. It is important that you eat to give your body fuel to burn just as a fire place<br />
                  needs wood to stay LIT!
                </Text>
                <Text $mt={6}>
                  Please add #TeamOutLaw (Coach: <b>@Breakmy5thLaw</b>) and follow me on Instagram (<b>@breakmy5thlaw</b>) and every fitness post tag <b>@breakmy5thlaw</b> and<br />
                  use hashtag #TeamOutLawFitness
                </Text>
                <Facts>
                  {facts.map(([k, v]) => (
                    <React.Fragment key={k}>
                      <FactName>{k}</FactName>
                      <FactValue $spill={v.length > 12}>{v}</FactValue>
                    </React.Fragment>
                  ))}
                </Facts>
                <Table>
                  {['', 'Protein', 'Carbs', 'Fat', 'Calories'].map(h => (
                    <Cell key={h} $bg="#a4191c" $head $bold>{h}</Cell>
                  ))}
                  {meals.map((row, r) =>
                    row.map((v, c) => (
                      <Cell
                        key={`${r}-${c}`}
                        $bg={r === 7 ? '#a6a6a6' : r % 2 ? '#d9d9d9' : '#f2f2f2'}
                        $bold={c === 0 || r === 7}
                        $edge={c === 4}
                        $last={r === 7}
                      >
                        {v}
                      </Cell>
                    )),
                  )}
                </Table>
                <Text $mt={67}>
                  Above will be your daily food intake. Weigh all meat after cooked. Feel free to change items just as long you hit the daily caloric intake each day. If<br />
                  you're hungry feel free to add as many vegetables as desired.
                </Text>
                <Text $mt={27} $indent={268}>Progress Report - return every Friday in the morning</Text>
                <Text $mt={7}>1- current diet (copy and paste meal plan)</Text>
                <Text $mt={6}>2- supplement list</Text>
              </Letter>
              <Panel>
                <MacroButton $w={155} $red $ml={84}>Export to PDF</MacroButton>
                <Note><b>Export to PDF</b> gives you the option to send the PDF as an<br />Outlook email attachment.</Note>
                <Row $mt={21}>
                  <MacroButton $w={154}>Input Form</MacroButton>
                  <MacroButton $w={154} $ml={14} $mt={1}>BMR Sheet</MacroButton>
                </Row>
              </Panel>
            </Sheet>
            <VScroll>
              <ScrollButton><svg width="7" height="4" viewBox="0 0 7 4"><path d="M0 4 3.5 0 7 4Z" fill="#222" /></svg></ScrollButton>
              <VThumb />
              <VTrack />
              <ScrollButton><svg width="7" height="4" viewBox="0 0 7 4"><path d="M0 0 3.5 4 7 0Z" fill="#222" /></svg></ScrollButton>
            </VScroll>
          </SheetArea>

          <TabStrip>
            <Slot $w={5} $ml={27}><svg width="5" height="8" viewBox="0 0 5 8"><path d="M5 0 0 4 5 8Z" fill="#bbb" /></svg></Slot>
            <Slot $w={5} $ml={23}><svg width="5" height="8" viewBox="0 0 5 8"><path d="M0 0 5 4 0 8Z" fill="#bbb" /></svg></Slot>
            <VSep $ml={40} $mt={3} />
            <SheetTab $w={84} $ml={2}>InputForm</SheetTab>
            <ActiveTab>ClientLetter</ActiveTab>
            <SheetTab $w={135} $ml={2} $ls={-0.05}>BMR.Maint.Macros</SheetTab>
            <VSep $ml={2} $mt={3} />
            <SheetTab $w={109} $ml={2}>Nutrient.Table</SheetTab>
            <VSep $ml={2} $mt={3} />
            <SheetTab $w={83} $ml={1} $black>Group.List</SheetTab>
            <VSep $ml={2} $mt={3} />
            <Slot $w={17} $ml={32}>
              <svg width="17" height="17" viewBox="0 0 17 17" fill="none" stroke="#777"><circle cx="8.5" cy="8.5" r="7.5" /><path d="M8.5 4.5V12.5M4.5 8.5H12.5" strokeWidth="1.6" /></svg>
            </Slot>
            <Push />
            <Slot $w={17}><svg width="2" height="11" viewBox="0 0 2 11" fill="#aaa"><path d="M0 0H2V2H0ZM0 4.5H2V6.5H0ZM0 9H2V11H0Z" /></svg></Slot>
            <Slot $w={751}>
              <ScrollButton><svg width="4" height="7" viewBox="0 0 4 7"><path d="M4 0 0 3.5 4 7Z" fill="#222" /></svg></ScrollButton>
              <HThumb />
              <HTrack />
              <ScrollButton><svg width="4" height="7" viewBox="0 0 4 7"><path d="M0 0 4 3.5 0 7Z" fill="#222" /></svg></ScrollButton>
            </Slot>
          </TabStrip>
          <Status>
            <Label $size={11} $ls={0}>Done.</Label>
            <Push />
            <Icon w={16} h={14}>
              <path d="M6 9.5H.5V1.5H13.5V5M3 12H5" />
              <circle cx="10.5" cy="9" r="2.5" strokeWidth="2" strokeDasharray="1.6 1" />
              <circle cx="10.5" cy="9" r="2" />
            </Icon>
            <Slot $w={101} $ml={1}><Label $size={11.5} $ls={-0.15}>Display Settings</Label></Slot>
            <ViewButton $on>
              <Icon w={14} h={14}><path d="M.5 .5H13.5V13.5H.5ZM.5 4.5H13.5M.5 9H13.5M4.5 .5V13.5M9 .5V13.5" /></Icon>
            </ViewButton>
            <ViewButton>
              <Icon w={14} h={14}><path d="M.5 .5H13.5V13.5H.5ZM3.5 2.5H10.5V11.5H3.5ZM5 5H9M5 7H9M5 9H9" /></Icon>
            </ViewButton>
            <ViewButton>
              <Icon w={14} h={14}><path d="M.5 .5H13.5V13.5H.5ZM4.5 .5V7.5H9.5V.5M.5 7.5H4.5" /></Icon>
            </ViewButton>
            <Slot $w={127} $ml={6}>
              <svg width="127" height="13" viewBox="0 0 127 13" stroke="#444">
                <path d="M0 6H8M13 6.5H113M63.5 4V9M118 6.5H126M122 2.5V10.5" />
                <rect x="50" y="1" width="5" height="11" fill="#333" stroke="none" />
              </svg>
            </Slot>
            <Slot $w={35} $ml={12}><Label $size={11} $ls={0}>80%</Label></Slot>
          </Status>
        </Window>
        <Wallpaper />
        <TaskbarEdge />
      </Desktop>
    </>
  );
}
